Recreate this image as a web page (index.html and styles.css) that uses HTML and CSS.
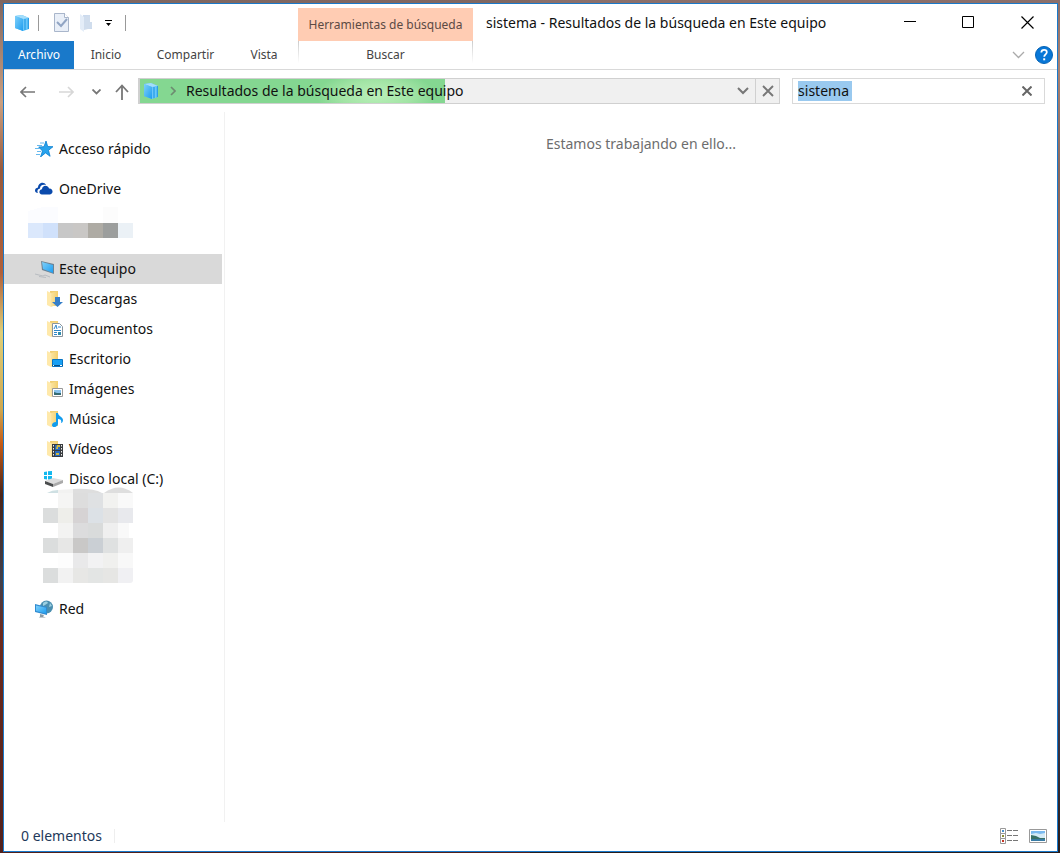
FILE: index.html
```html
<!DOCTYPE html>
<html lang="es">
<head>
<meta charset="utf-8">
<title>sistema - Resultados de la búsqueda en Este equipo</title>
<link rel="stylesheet" href="styles.css">
</head>
<body>
<svg class="defs" width="0" height="0" aria-hidden="true">
  <defs>
    <linearGradient id="gold" x2="1"><stop offset="0" stop-color="#fbe4a0"/><stop offset="1" stop-color="#f3cf6d"/></linearGradient>
    <linearGradient id="sky" x2="1" y2="1"><stop offset="0" stop-color="#7fd0fa"/><stop offset="1" stop-color="#1d9df0"/></linearGradient>
    <symbol id="folder" viewBox="0 0 16 16"><path d="M3 0h8v15H3z" fill="#f0cf73"/><path d="M0 0l4 2v14l-4-2z" fill="#ffe9aa"/><path d="M4 2l7-2v13l-7 3z" fill="url(#gold)"/></symbol>
    <symbol id="results" viewBox="0 0 14 16"><path d="M0 1l7-1 7 3v11l-6 2-8-3z" fill="#51bdf8"/><path d="M0 1l7-1 7 3-6 1z" fill="#a4ddfa"/><path d="M0 1l8 3v12l-8-3z" fill="url(#sky)"/><path d="M8.500 4v12M11.500 3v12" stroke="#6cc6f9"/><path d="M10 4v11M13.500 3v11" stroke="#2f9de4"/></symbol>
  </defs>
</svg>
<div class="window">
  <header class="titlebar">
    <div class="quick">
      <svg class="quick-app" width="14" height="16"><use href="#results"/></svg>
      <span class="rule"></span>
      <button class="plain" aria-label="Propiedades"><svg width="15" height="19" viewBox="0 0 15 19"><path d="M.5.5h10l4 4v14H.5z" fill="#e9eff8" stroke="#a9b6cb"/><path d="M10.500 0v4.500h4" fill="#fff" stroke="#a9b6cb"/><path d="M3 9l4 4 6-7" fill="none" stroke="#91a5c4" stroke-width="2"/></svg></button>
      <button class="plain folder-new" aria-label="Nueva carpeta"><svg width="12" height="18" viewBox="0 0 12 18"><path d="M3 1h7v7h2v7H3z" fill="#cbdaee"/><path d="M0 0l4 3v15l-4-3z" fill="#e4edf8"/><path d="M4 3l6-2v7h2v6l-8 2z" fill="#d0dded"/></svg></button>
      <button class="plain" aria-label="Personalizar barra"><svg width="7" height="6" viewBox="0 0 7 6"><path d="M0 0h7v1H0zM1 3h5L3.500 6z"/></svg></button>
      <span class="rule last"></span>
    </div>
    <div class="context">Herramientas de búsqueda</div>
    <h1 class="title">sistema - Resultados de la búsqueda en Este equipo</h1>
    <div class="controls">
      <button aria-label="Minimizar"><svg width="12" height="13" viewBox="0 0 12 13"><path d="M0 5.500h12" stroke="#000"/></svg></button>
      <button aria-label="Maximizar"><svg width="13" height="13" viewBox="0 0 13 13"><path d="M.5.5h11v11H.5z" fill="none" stroke="#000"/></svg></button>
      <button aria-label="Cerrar"><svg width="13" height="13" viewBox="0 0 13 13"><path d="M.5.5l12 12M12.500.5l-12 12" stroke="#000" stroke-width="1.200"/></svg></button>
    </div>
  </header>
  <nav class="tabs">
    <button class="tab file">Archivo</button>
    <button class="tab home">Inicio</button>
    <button class="tab share">Compartir</button>
    <button class="tab view">Vista</button>
    <button class="tab search-tab">Buscar</button>
    <div class="ribbon-end">
      <button class="plain" aria-label="Expandir cinta"><svg width="13" height="8" viewBox="0 0 13 8"><path d="M1 1l5.500 5.500L12 1" fill="none" stroke="#aaa" stroke-width="1.300"/></svg></button>
      <button class="help" aria-label="Ayuda"><svg width="18" height="18" viewBox="0 0 18 18"><circle cx="9" cy="9" r="8.500" fill="#0877d7" stroke="#0563b5"/><path d="M6.300 6.500C6.500 3 11.800 3.200 11.800 6.300c0 2-2.600 2.200-2.600 4.500" fill="none" stroke="#fff" stroke-width="1.800"/><path d="M8.200 12.300h2v2h-2z" fill="#fff"/></svg></button>
    </div>
  </nav>
  <div class="toolbar">
    <div class="history">
      <button class="plain" aria-label="Atrás"><svg width="16" height="12" viewBox="0 0 16 12"><path d="M15 6H1M6 1L1 6l5 5" fill="none" stroke="#777" stroke-width="1.600"/></svg></button>
      <button class="plain" aria-label="Adelante"><svg width="16" height="12" viewBox="0 0 16 12"><path d="M1 6h14M10 1l5 5-5 5" fill="none" stroke="#d7d7d7" stroke-width="1.600"/></svg></button>
      <button class="plain" aria-label="Ubicaciones recientes"><svg width="9" height="6" viewBox="0 0 9 6"><path d="M.5.5l4 4 4-4" fill="none" stroke="#777" stroke-width="1.800"/></svg></button>
      <button class="plain" aria-label="Subir"><svg width="14" height="16" viewBox="0 0 14 16"><path d="M7 16V1.500M1 8l6-6.500L13 8" fill="none" stroke="#777" stroke-width="1.800"/></svg></button>
    </div>
    <div class="address">
      <div class="crumbs">
        <svg width="14" height="16"><use href="#results"/></svg>
        <svg class="crumb-arrow" width="6" height="10" viewBox="0 0 6 10"><path d="M1 1l4 4-4 4" fill="none" stroke="#6d8b70" stroke-width="1.700"/></svg>
        <span>Resultados de la búsqueda en Este equipo</span>
      </div>
      <button class="plain drop" aria-label="Ubicaciones anteriores"><svg width="12" height="8" viewBox="0 0 12 8"><path d="M1 1l5 5 5-5" fill="none" stroke="#777" stroke-width="2"/></svg></button>
      <button class="plain stop" aria-label="Detener"><svg width="12" height="12" viewBox="0 0 12 12"><path d="M1 1l10 10M11 1L1 11" stroke="#777" stroke-width="1.900"/></svg></button>
    </div>
    <div class="search">
      <input type="text" value="sistema" aria-label="Buscar en Este equipo">
      <button class="plain" aria-label="Borrar búsqueda"><svg width="10" height="10" viewBox="0 0 10 10"><path d="M.5.5l9 9M9.500.5l-9 9" stroke="#666" stroke-width="2"/></svg></button>
    </div>
  </div>
  <div class="content">
    <nav class="sidebar">
      <a class="item spaced" href="#"><svg width="18" height="16" viewBox="0 0 18 16"><path d="M11 0l1.700 5.500 5.300.2-4.500 3.600 1.600 6-4.600-3.400L5.500 16l2-6-3.800-4 5.300-.3z" fill="#27a3ed" stroke="#087ed1" stroke-width=".8"/><path d="M5 2h4M2 4.500h5M0 7.500h5M2 10.500h4M1 13.500h4" stroke="#66b9ee"/></svg>Acceso rápido</a>
      <a class="item" href="#"><svg width="18" height="16" viewBox="0 0 18 16"><path d="M3 12C-1 12-1 7 3 6.500 3 2 9 0 11 4c-4-1-6 1-6 3.500C2 8 2 11 3 12z" fill="#0a4aac"/><path d="M7 13.500C3 13 4 8.500 7 8.300 7 4 13 3.500 14 7.500c4-.5 5 5 1 6z" fill="#0a4aac"/></svg>OneDrive</a>
      <svg class="mosaic-account" width="105" height="31" viewBox="0 0 105 31" shape-rendering="crispEdges" aria-hidden="true"><path d="M0 4L15 0h15v16H0z" fill="#fbfcff"/><path d="M75 0h15v16H75z" fill="#fcfcfc"/><path d="M0 16h15v15H0z" fill="#dbe8fc"/><path d="M15 16h15v15H15z" fill="#d0e1fb"/><path d="M30 16h15v15H30z" fill="#c7c7c7"/><path d="M45 16h15v15H45z" fill="#c9c7c5"/><path d="M60 16h15v15H60z" fill="#aeaba4"/><path d="M75 16h15v15H75z" fill="#9c9e9d"/><path d="M90 16h15v15H90z" fill="#ebf1f6"/></svg>
      <a class="item active" href="#"><svg width="20" height="18" viewBox="0 0 20 18"><path d="M6 1l13 3v10L7 10z" fill="#6d8293"/><path d="M7 2l11 3v8L8 9z" fill="url(#sky)"/><path d="M0 14l8 2 2-1 5 2M4 16.500l7 1" fill="none" stroke="#b8bcc1"/></svg>Este equipo</a>
      <a class="item child" href="#"><svg width="16" height="16" viewBox="0 0 16 16"><use href="#folder"/><path d="M8 6h5v5h3l-5.500 5L5 11h3z" fill="#367fc9"/></svg>Descargas</a>
      <a class="item child" href="#"><svg width="16" height="16" viewBox="0 0 16 16"><use href="#folder"/><path d="M5.500 2.500h7l3 3v10h-10z" fill="#fff" stroke="#8a959d"/><path d="M7 8l2-4 1 4M11 6h3M7 9.500h7M7 11.500h3M7 13.500h3" fill="none" stroke="#2f88ca"/><path d="M11 11h3v3h-3z" fill="#328eae"/></svg>Documentos</a>
      <a class="item child" href="#"><svg width="16" height="16" viewBox="0 0 16 16"><use href="#folder"/><path d="M5.500 8.500h10v7h-10z" fill="#18a0f3" stroke="#0874c3"/><path d="M5 14.500h11" stroke="#075185"/><path d="M6 14h1v1H6zM13 14h2v1h-2z" fill="#fff"/></svg>Escritorio</a>
      <a class="item child" href="#"><svg width="16" height="16" viewBox="0 0 16 16"><use href="#folder"/><path d="M5.500 7.500h10v8h-10z" fill="#fff" stroke="#999"/><path d="M7 9h7v5H7z" fill="#87c2ee"/><path d="M7 11l3 1 4 0v2H7z" fill="#356b73"/></svg>Imágenes</a>
      <a class="item child" href="#"><svg width="16" height="16" viewBox="0 0 16 16"><use href="#folder"/><path d="M9 2h2c0 3 5 4 5 7 0 2-1 3-2 3 1-3-1-4-3-4v5c-1 4-6 4-6 1 0-2 2-3 4-3z" fill="#119cee"/></svg>Música</a>
      <a class="item child" href="#"><svg width="16" height="16" viewBox="0 0 16 16"><use href="#folder"/><path d="M5 3h11v13H5z" fill="#393d40"/><path d="M8 4h5v5H8zM8 10h5v5H8z" fill="#276ac0"/><path d="M10 4h3v2h-2v2H9zM9 12h3v2H9z" fill="#d0b840"/><path d="M6.500 4v12M14.500 4v12" stroke="#eee" stroke-dasharray="1.500 1.500"/></svg>Vídeos</a>
      <a class="item child disk" href="#"><svg width="19" height="16" viewBox="0 0 19 16"><path d="M0 1l3-.5V4H0zM4 .3L8 0v4H4zM0 5h3v3.500L0 8zM4 5h4v4l-4-.4z" fill="#12b8ef"/><path d="M1 10l8-3 10 2-10 4z" fill="#ddd"/><path d="M1 10l8 3v3l-8-3z" fill="#4a4c4d"/><path d="M9 13l10-4v3L9 16z" fill="#aaa"/></svg>Disco local (C:)</a>
      <svg class="mosaic-drives" width="90" height="96" viewBox="0 0 90 96" aria-hidden="true">
        <g shape-rendering="crispEdges">
          <path d="M15 6h15v15H15z" fill="#f5f5f4"/><path d="M30 6h15v15H30z" fill="#dddddd"/><path d="M45 6h15v15H45z" fill="#dfe1e3"/><path d="M60 6h15v15H60z" fill="#f2f2f0"/><path d="M75 6h15v15H75z" fill="#f9f9f9"/>
          <path d="M0 21h15v15H0z" fill="#dbdddd"/><path d="M15 21h15v15H15z" fill="#eeeeea"/><path d="M30 21h15v15H30z" fill="#d6d3d4"/><path d="M45 21h15v15H45z" fill="#dce1e6"/><path d="M60 21h15v15H60z" fill="#e3e3e3"/><path d="M75 21h15v15H75z" fill="#e8e9ed"/>
          <path d="M15 36h15v15H15z" fill="#f3f3f2"/><path d="M30 36h15v15H30z" fill="#dcdcdd"/><path d="M45 36h15v15H45z" fill="#d9dbdb"/><path d="M60 36h15v15H60z" fill="#efefef"/><path d="M75 36h11v15H75z" fill="#f9f9f9"/>
          <path d="M0 51h15v15H0z" fill="#dbdddd"/><path d="M15 51h15v15H15z" fill="#e7e7e6"/><path d="M30 51h15v15H30z" fill="#c9c8c7"/><path d="M45 51h15v15H45z" fill="#cacfd4"/><path d="M60 51h15v15H60z" fill="#dfe1e1"/><path d="M75 51h15v15H75z" fill="#efefef"/>
          <path d="M15 66h15v15H15z" fill="#fdfdfd"/><path d="M30 66h15v15H30z" fill="#e9e9ea"/><path d="M45 66h15v15H45z" fill="#f2f2f3"/><path d="M60 66h15v15H60z" fill="#f0f0ee"/><path d="M75 66h15v15H75z" fill="#f8f8f8"/>
          <path d="M0 81h15v15H0z" fill="#dbdddd"/><path d="M15 81h15v15H15z" fill="#f2f2f2"/><path d="M30 81h15v15H30z" fill="#e7e7e5"/><path d="M45 81h15v15H45z" fill="#e3e5e4"/><path d="M60 81h15v15H60z" fill="#e6e6e4"/>
        </g>
        <path d="M75 81h15v12q0 3-3 3H75z" fill="#f0f0f3"/>
        <path d="M4 6q5-3 11-3v3z" fill="#cfe0e3"/><path d="M15 3l15-1v4H15z" fill="#f2f2f1"/><path d="M30 2q20-1 29 4H30zM61 6q15-11 29 0z" fill="#dedede"/>
      </svg>
      <a class="item" href="#"><svg width="18" height="18" viewBox="0 0 18 18"><circle cx="11.500" cy="7" r="6.500" fill="#4b8fb0"/><path d="M8 3c2-2 4-2 5 0l-3 2-2 1zM15 3l2 3-3 1z" fill="#9dd0e2"/><path d="M0 4l12 3v8L0 12z" fill="#318bd0"/><path d="M1 5.500l10 2.300v5.700L1 11z" fill="url(#sky)"/><path d="M5 14l4 1-1 1.500 3 1H4l1-1z" fill="#8b9aa3"/></svg>Red</a>
    </nav>
    <main class="results"><p>Estamos trabajando en ello...</p></main>
  </div>
  <footer class="status">
    <span class="count">0 elementos</span>
    <div class="views">
      <button class="plain" aria-label="Detalles"><svg width="18" height="16" viewBox="0 0 18 16"><path d="M.5.500h5v5h-5zM.5 5.500h5v5h-5zM.5 10.500h5v5h-5z" fill="#fff" stroke="#999"/><path d="M7 2.500h5M13 2.500h5M7 7.500h5M13 7.500h5M7 12.500h5M13 12.500h5" stroke="#777"/><path d="M2 2h2v2H2z" fill="#4b91cc"/><path d="M2 7h2v2H2z" fill="#8b8c33"/><path d="M2 12h2v2H2z" fill="#c73424"/></svg></button>
      <button class="plain" aria-label="Iconos grandes"><svg width="18" height="14" viewBox="0 0 18 14"><path d="M.5.5h17v13H.5z" fill="#fff" stroke="#999"/><path d="M2 2h14v10H2z" fill="#7abaf0"/><path d="M2 5l5-1 4 1 5-1v5H2z" fill="#d4ebf7"/><path d="M2 6l5 1 4 2h5v1H2z" fill="#397267"/><path d="M2 10h14v2H2z" fill="#397ca5"/></svg></button>
    </div>
  </footer>
</div>
</body>
</html>
```

FILE: styles.css
```css
* { box-sizing: border-box; }
body {
  margin: 0;
  min-height: 100vh;
  display: flex;
  padding: 3px 2px 1px 3px;
  font: 14px/20px "Noto Sans", "Open Sans", sans-serif;
  color: #111;
  background:
    linear-gradient(#8b6f6a, #a98272 8%, #8b6a60 20%, #b56b4c 42%, #432c35 55%, #31262f 70%, #444058 80%, #261c1c) right / 50% 100% no-repeat,
    linear-gradient(#806660, #cba080 12%, #985a3c 20%, #b0603a 32%, #e0cf78 39%, #cfa850 48%, #c55b16 52%, #4a2418 58%, #40404c 68%, #6b2a1e 74%, #50201c) left / 50% 100% no-repeat;
}
button { font: inherit; color: inherit; border: 0; padding: 0; background: none; }
svg { display: block; flex: none; }
.defs { position: absolute; }
.window { flex: 1; min-width: 0; display: flex; flex-direction: column; border: 1px solid #1979ca; background: #fff; }
.plain, .help { display: flex; align-items: center; justify-content: center; flex: none; }

.titlebar { display: flex; height: 37px; }
.quick { width: 294px; display: flex; align-items: center; padding-left: 11px; }
.quick .rule { width: 1px; height: 16px; background: #999; margin: 0 15px 0 9px; }
.quick .folder-new { margin: 0 13px 0 11px; }
.quick .rule.last { margin-left: 13px; }
.context { width: 175px; margin-top: 4px; background: #ffccb3; color: #5c4a44; font-size: 12px; line-height: 34px; text-align: center; white-space: nowrap; }
.title { flex: 1; min-width: 0; margin: 0; padding-left: 13px; font-size: 14px; line-height: 37px; font-weight: 400; white-space: nowrap; overflow: hidden; }
.controls { display: flex; }
.controls button { width: 59px; display: flex; align-items: center; justify-content: center; }

.tabs { display: flex; height: 29px; border-bottom: 1px solid #d9d9d9; font-size: 12px; color: #444; }
.file { width: 70px; background: #1979ca; color: #fff; }
.home { width: 64px; }
.share { width: 95px; }
.view { width: 62px; }
.search-tab {
  width: 175px; margin-left: 3px;
  background: linear-gradient(#ccc, #fff 80%) left / 1px 100% no-repeat, linear-gradient(#ccc, #fff 80%) right / 1px 100% no-repeat;
}
.ribbon-end { flex: 1; display: flex; justify-content: flex-end; align-items: center; gap: 10px; padding-right: 4px; }

.toolbar { display: flex; height: 42px; padding: 8px 12px 8px 0; }
.history { width: 134px; display: flex; align-items: center; padding: 2px 0 0 16px; }
.history .plain:nth-child(2) { margin-left: 22px; }
.history .plain:nth-child(3) { margin-left: 18px; }
.history .plain:nth-child(4) { margin-left: 14px; }
.address { flex: 642; min-width: 0; display: flex; border: 1px solid #d0d0d0; border-width: 1px 1px 1px 2px; background: #f0f0f0; }
.crumbs {
  flex: 1; min-width: 0; display: flex; align-items: center; padding-left: 4px; white-space: nowrap;
  background: radial-gradient(ellipse 60px 24px at 236px 16px, #baf0b9, #a2e4a5 60%, #84d791) left / 305px 100% no-repeat;
}
.crumb-arrow { margin: 0 10px 0 12px; }
.drop { width: 24px; }
.stop { width: 24px; border-left: 1px solid #d0d0d0; }
.search { flex: 235; min-width: 0; display: flex; align-items: center; margin-left: 12px; border: 1px solid #d9d9d9; padding: 0 12px 0 5px; }
.search input {
  flex: 1; min-width: 0; height: 20px; border: 0; padding: 0; outline: 0; font: inherit; color: #111;
  background: linear-gradient(#99c9ef, #99c9ef) left / 54px 100% no-repeat;
}

.content { flex: 1; display: flex; }
.sidebar { width: 221px; border-right: 1px solid #f1f1f1; padding: 22px 2px 0 0; }
.item { display: flex; align-items: center; height: 30px; padding-left: 31px; gap: 6px; color: #111; text-decoration: none; white-space: nowrap; }
.spaced { margin-bottom: 10px; }
.active { background: #d9d9d9; gap: 4px; }
.child { padding-left: 43px; }
.disk { padding-left: 40px; }
.mosaic-account { margin: 3px 0 16px 24px; }
.mosaic-drives { margin: -7px 0 11px 39px; }
.results { flex: 1; min-width: 0; padding-top: 22px; text-align: center; color: #6d6d6d; }
.results p { margin: 0; }

.status { display: flex; align-items: center; justify-content: space-between; height: 29px; padding: 0 10px 2px 17px; color: #1e395b; }
.count { padding-right: 12px; border-right: 1px solid #eee; line-height: 14px; }
.views { display: flex; gap: 11px; }
```
